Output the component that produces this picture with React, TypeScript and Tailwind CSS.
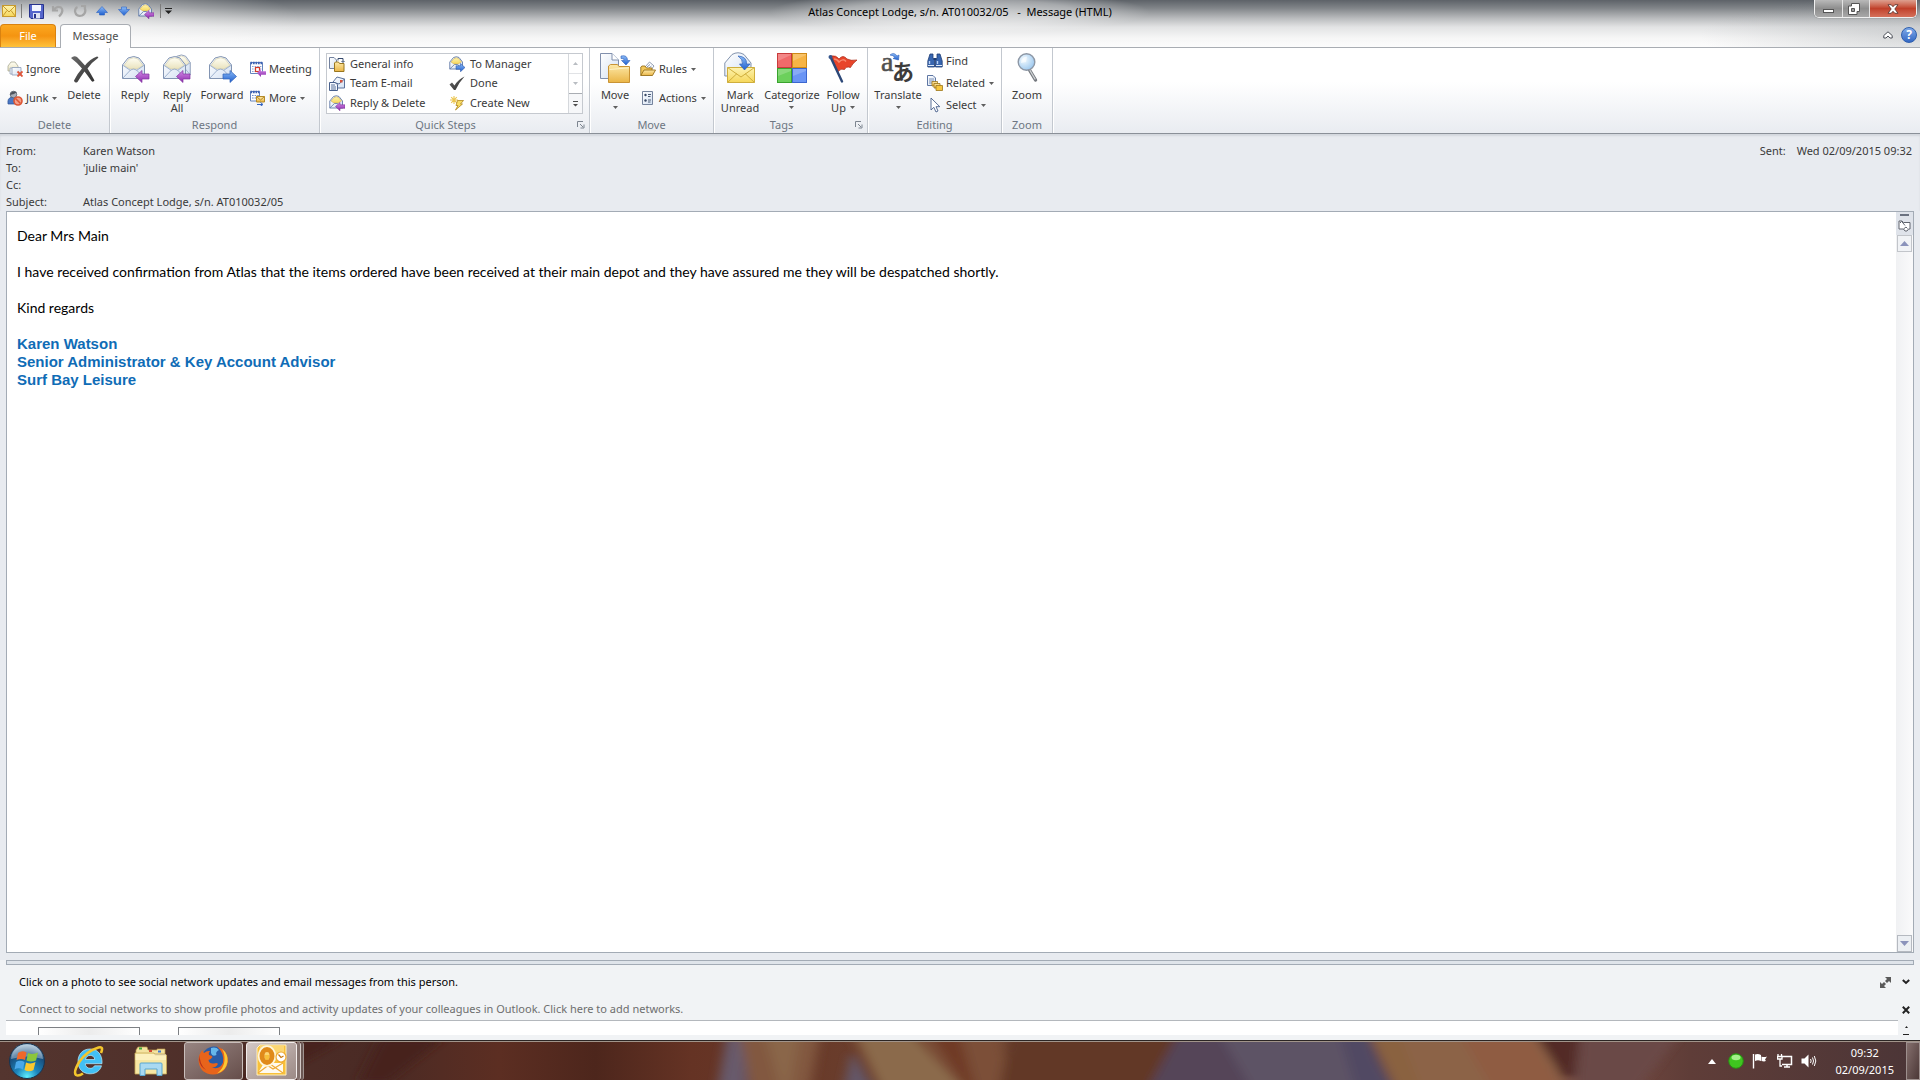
import type { ReactNode } from 'react';
import clsx from 'clsx';

/* ---------- shared icon pieces ---------- */

function Defs() {
  return (
    <svg className="absolute h-0 w-0" aria-hidden="true">
      <defs>
        <linearGradient id="paper" x1="0" y1="0" x2="1" y2="1">
          <stop offset="0" stopColor="#ffffff" />
          <stop offset="1" stopColor="#d3e0f2" />
        </linearGradient>
        <linearGradient id="cream" x1="0" y1="0" x2="0" y2="1">
          <stop offset="0" stopColor="#fffef4" />
          <stop offset="1" stopColor="#e9e2bd" />
        </linearGradient>
        <linearGradient id="folder" x1="0" y1="0" x2="0" y2="1">
          <stop offset="0" stopColor="#fde9a8" />
          <stop offset="1" stopColor="#eab546" />
        </linearGradient>
        <linearGradient id="mail" x1="0" y1="0" x2="0" y2="1">
          <stop offset="0" stopColor="#fdf3b0" />
          <stop offset="1" stopColor="#f6d75a" />
        </linearGradient>
        <linearGradient id="purple" x1="0" y1="0" x2="0" y2="1">
          <stop offset="0" stopColor="#d58be8" />
          <stop offset="1" stopColor="#8b2bac" />
        </linearGradient>
        <linearGradient id="blue" x1="0" y1="0" x2="0" y2="1">
          <stop offset="0" stopColor="#8dbcf7" />
          <stop offset="1" stopColor="#1f5fce" />
        </linearGradient>
        <linearGradient id="ink" x1="0" y1="0" x2="1" y2="1">
          <stop offset="0" stopColor="#6b6b6b" />
          <stop offset="1" stopColor="#2b2b2b" />
        </linearGradient>
        <radialGradient id="lens" cx="0.35" cy="0.35" r="0.8">
          <stop offset="0" stopColor="#f4fbff" />
          <stop offset="1" stopColor="#8fc0ec" />
        </radialGradient>
      </defs>
    </svg>
  );
}

function OpenEnvelope() {
  return (
    <g>
      <path d="M1.500 9 L7 2 Q13 -1 18 2 L23.500 9 V22.500 H1.500 Z" fill="url(#paper)" stroke="#8294b2" />
      <path d="M3 9.500 L8 3 Q13 .5 17 3 L22 9.500 L16 13 H9 Z" fill="url(#cream)" stroke="#cdc7a4" strokeWidth=".6" />
      <path d="M1.500 9 L9.500 14.500 M23.500 9 L15.500 14.500 M1.500 22.500 L9.500 14 Q12.500 12 15.500 14 L23.500 22.500" fill="none" stroke="#96abcb" strokeWidth=".9" />
    </g>
  );
}

function LeftArrow() {
  return <path d="M14.500 20.500 L21 14.500 V18 H28 V23 H21 V26.500 Z" fill="url(#purple)" stroke="#8333a0" strokeWidth=".7" />;
}

function BigSvg({ children }: { children: ReactNode }) {
  return (
    <svg width="32" height="32" viewBox="0 0 32 32" aria-hidden="true">
      {children}
    </svg>
  );
}

function SmallSvg({ children }: { children: ReactNode }) {
  return (
    <svg width="16" height="16" viewBox="0 0 16 16" className="shrink-0" aria-hidden="true">
      {children}
    </svg>
  );
}

const DeleteIcon = () => (
  <BigSvg>
    <path
      d="M3 6 Q6 3 9 5 Q13 9 17 13.500 Q22 7 29 4.500 Q31 4.500 30 6 Q24 10 19.500 16.500 Q23 22 26.500 28.500 Q25 30.500 23.500 29 Q20 24 16.500 19.500 Q12.500 25 9.500 30 Q6.500 31.500 6 28.500 Q9 22 14 16.500 Q9 10.500 3 6 Z"
      fill="url(#ink)"
    />
  </BigSvg>
);

const ReplyIcon = () => (
  <BigSvg>
    <g transform="translate(2 4)"><OpenEnvelope /><LeftArrow /></g>
  </BigSvg>
);

const ReplyAllIcon = () => (
  <BigSvg>
    <g transform="translate(10 2.500) scale(.82 .9)"><OpenEnvelope /></g>
    <g transform="translate(1 4)"><OpenEnvelope /><LeftArrow /></g>
  </BigSvg>
);

const ForwardIcon = () => (
  <BigSvg>
    <g transform="translate(2 4)">
      <OpenEnvelope />
      <path d="M28.500 20.500 L22 14.500 V18 H15 V23 H22 V26.500 Z" fill="url(#blue)" stroke="#2b5eb8" strokeWidth=".7" />
    </g>
  </BigSvg>
);

const BlueHook = () => (
  <path d="M22 4 Q28.500 2.500 28.500 8.500 H31 L27 13 L22.500 8.500 H25 Q25.500 6 22 6.500 Z" fill="url(#blue)" stroke="#2b5eb8" strokeWidth=".6" />
);

const MoveIcon = () => (
  <BigSvg>
    <path d="M1.500 1.500 H13 L19.500 8 V26.500 H1.500 Z" fill="url(#paper)" stroke="#8190ad" />
    <path d="M13 1.500 V8 H19.500" fill="#fff" stroke="#8190ad" />
    <BlueHook />
    <path d="M9.500 30.500 V14 L11.500 12.500 H18.500 L20 14.500 H30.500 V30.500 Z" fill="url(#folder)" stroke="#c99334" />
    <path d="M10.500 17.500 L30 15.800" stroke="#fff3c8" />
  </BigSvg>
);

const MarkUnreadIcon = () => (
  <BigSvg>
    <path d="M.8 11 L8 2.500 Q14 -1 20 2.500 L27 11 V24 H.8 Z" fill="url(#paper)" stroke="#8293ad" />
    <path d="M3.500 15.500 H30.500 V30.500 H3.500 Z" fill="url(#mail)" stroke="#cfae3c" />
    <path d="M3.500 30.500 L13 21.500 M30.500 30.500 L21 21.500 M3.500 15.500 L17 25 L30.500 15.500" fill="none" stroke="#cfae3c" />
    <path d="M14 4 Q23 4.500 22.500 12 H26 L20.500 18 L15.500 12 H18.500 Q19 7 14 4 Z" fill="url(#blue)" stroke="#2b5eb8" strokeWidth=".7" />
  </BigSvg>
);

const CategorizeIcon = () => (
  <BigSvg>
    <rect x="1.500" y="1.500" width="14" height="14" fill="#f06a6a" stroke="#c83c3c" />
    <rect x="16.500" y="1.500" width="14" height="14" fill="#f7b445" stroke="#cf8a18" />
    <rect x="1.500" y="16.500" width="14" height="14" fill="#6cd05c" stroke="#39a32e" />
    <rect x="16.500" y="16.500" width="14" height="14" fill="#6a95f5" stroke="#3b66cf" />
    <path d="M2 9 L15 3 V2 H2 Z M17 9 L30 3 V2 H17 Z M2 24 L15 19 V17 H2 Z M17 24 L30 19 V17 H17 Z" fill="#fff" opacity=".2" />
  </BigSvg>
);

const FollowUpIcon = () => (
  <BigSvg>
    <path d="M4 4 Q9 3 12 7 Q16 2 20 7 Q24 9 30 8 Q25 12 23.500 15.500 Q19 14 17.500 17.500 Q14 16 11 19.500 Z" fill="#e8452a" stroke="#a92612" strokeWidth=".7" />
    <path d="M7 7 Q10 7 12 10 Q16 6 19 9.500" fill="none" stroke="#f78a70" strokeWidth="1.500" />
    <path d="M3.500 5 L15 29.500" stroke="#2c4878" strokeWidth="2.400" strokeLinecap="round" />
    <circle cx="3.500" cy="5" r="2" fill="#35558c" />
  </BigSvg>
);

const TranslateIcon = () => (
  <svg width="34" height="46" viewBox="0 -8 34 46" className="-mt-2 -mb-1.5" aria-hidden="true">
    <text x="0" y="19" fontSize="28" fontFamily="Liberation Serif, serif" fill="#505050" stroke="#505050" strokeWidth=".6">a</text>
    <text x="11" y="28" fontSize="22" fontFamily="Noto Sans CJK JP, sans-serif" fontWeight="700" fill="#3c3c3c">あ</text>
    <path d="M9 3 Q13 -.5 16 4 L18 3 L17.500 8 L12 6.500 L14 5.500 Q12 3 9 3 Z" fill="url(#blue)" stroke="#2b5eb8" strokeWidth=".6" />
  </svg>
);

const ZoomIcon = () => (
  <BigSvg>
    <path d="M18.500 18 L24.500 28" stroke="#74787e" strokeWidth="3.400" strokeLinecap="round" />
    <path d="M19 18.500 L24 27" stroke="#cfd2d5" strokeWidth="1.400" strokeLinecap="round" />
    <circle cx="15.500" cy="10" r="8.300" fill="url(#lens)" stroke="#8d97a5" strokeWidth="1.400" />
    <path d="M10 11 Q10 5 16 4.500 L15 10 Z" fill="#fff" opacity=".6" />
  </BigSvg>
);

const IgnoreIcon = () => (
  <SmallSvg>
    <path d="M1 5 L4 1 H8 L11 5 V10 H1 Z" fill="url(#cream)" stroke="#a9a994" strokeWidth=".8" />
    <path d="M3 7 H12 V13 H3 Z" fill="#eef3fb" stroke="#98a6bd" strokeWidth=".8" />
    <path d="M5 6.500 H14 V14 H5 Z" fill="url(#paper)" stroke="#8d9db8" strokeWidth=".8" />
    <path d="M10.500 10.500 L15.500 15.500 M15.500 10.500 L10.500 15.500" stroke="#e0563a" strokeWidth="1.800" />
  </SmallSvg>
);

const JunkIcon = () => (
  <SmallSvg>
    <path d="M1 14 Q0 8 5 7 Q9 7 10 14 Z" fill="#4a78c4" stroke="#2b4f92" strokeWidth=".7" />
    <circle cx="6.500" cy="4.500" r="3.300" fill="#a9afb9" stroke="#4d535d" strokeWidth=".7" />
    <path d="M3 5 Q4 0 10 2 L7 4 Z" fill="#4d535d" />
    <circle cx="11" cy="11" r="4" fill="#f5a08a" stroke="#dc5634" strokeWidth="1.600" />
    <path d="M8.500 8.500 L13.500 13.500" stroke="#dc5634" strokeWidth="1.600" />
  </SmallSvg>
);

const MeetingIcon = () => (
  <SmallSvg>
    <path d="M.5 1.500 H12.500 V12.500 H.5 Z" fill="#fff" stroke="#6483bd" />
    <path d="M.5 2 H12.500" stroke="#3b62b4" strokeWidth="2.400" strokeDasharray="1.700 .8" />
    <path d="M2 5.500 H11.500 M2 8 H11.500 M2 10.500 H8" stroke="#8aa5d6" strokeWidth="1.200" strokeDasharray="1.600 1" />
    <rect x="5.500" y="6.500" width="4" height="4" fill="#fff" stroke="#d33a2a" strokeWidth="1.200" />
    <path d="M7 12 L11 8 V10.300 H16 V13.700 H11 V16 Z" fill="url(#purple)" />
  </SmallSvg>
);

const MoreIcon = () => (
  <SmallSvg>
    <path d="M.5 1.500 H9.500 V11 H.5 Z" fill="#fff" stroke="#6483bd" />
    <path d="M.5 2 H9.500" stroke="#3b62b4" strokeWidth="2.400" strokeDasharray="1.700 .8" />
    <path d="M2 5.500 H9 M2 8 H7" stroke="#6a8cc9" strokeWidth="1.200" strokeDasharray="1.600 1" />
    <path d="M6.500 6.500 H14.500 V12 H6.500 Z" fill="url(#folder)" stroke="#b48a28" />
    <path d="M6.500 6.500 L10.500 10 L14.500 6.500" fill="none" stroke="#b48a28" />
    <path d="M7 14.500 H12 M10.500 12.500 L13 14.500 L10.500 16" fill="none" stroke="#2f62c0" />
  </SmallSvg>
);

const MoveSmallIcon = () => (
  <SmallSvg>
    <path d="M.5 1.500 H5 L7.500 4 V12.500 H.5 Z" fill="url(#paper)" stroke="#72819e" />
    <path d="M9 2.500 H14 V6 M9 2.500 V4.500 M12.500 5 L14 6.500 L15.500 5" fill="none" stroke="#33476b" />
    <path d="M5.500 15.500 V7 L6.500 6 H9.500 L10.500 7.500 H15 V15.500 Z" fill="url(#folder)" stroke="#99761f" />
  </SmallSvg>
);

const TeamIcon = () => (
  <SmallSvg>
    <path d="M4 7 L8 2 L15.500 4 V13 H4 Z" fill="url(#paper)" stroke="#5c739c" />
    <path d="M4 7 L10 9 L15.500 4" fill="none" stroke="#5c739c" />
    <rect x="11" y="5" width="2.500" height="2.500" fill="#d7523b" />
    <path d="M.5 7.500 H6 L8.500 9.500 V15.500 H.5 Z" fill="#f5f9ff" stroke="#48608c" />
    <path d="M2 10 H6 M2 12 H7 M2 14 H7" stroke="#48608c" strokeWidth=".9" />
  </SmallSvg>
);

function SmallEnvelope() {
  return (
    <g>
      <path d="M.8 6 L4.500 1.500 Q7.500 0 10 1.500 L13.500 6 V13 H.8 Z" fill="url(#paper)" stroke="#5d78a6" strokeWidth=".9" />
      <path d="M2 6 L5 2.500 Q7.500 1 9.500 2.500 L12.500 6 L9 8 H5 Z" fill="url(#mail)" stroke="#cfae5a" strokeWidth=".6" />
      <path d="M.8 13 L5.500 8.500 H8.500 L13.500 13" fill="none" stroke="#5d78a6" strokeWidth=".8" />
    </g>
  );
}

const ReplyDeleteIcon = () => (
  <SmallSvg>
    <SmallEnvelope />
    <path d="M6.500 11.500 L11 7.500 V9.800 H16 V13.300 H11 V15.800 Z" fill="url(#purple)" stroke="#74238f" strokeWidth=".5" />
  </SmallSvg>
);

const ToManagerIcon = () => (
  <SmallSvg>
    <SmallEnvelope />
    <path d="M16 11.500 L11.500 7.500 V9.800 H7 V13.300 H11.500 V15.800 Z" fill="url(#blue)" stroke="#1e4da3" strokeWidth=".5" />
  </SmallSvg>
);

const DoneIcon = () => (
  <SmallSvg>
    <path d="M.5 9.500 L3 7.500 L5.500 10.500 Q9 4.500 15.500 1.500 Q10 7.500 6.500 15 H5 Z" fill="url(#ink)" />
  </SmallSvg>
);

const CreateNewIcon = () => (
  <SmallSvg>
    <path d="M5 1 V9 M1 5 H9 M2.200 2.200 L7.800 7.800 M7.800 2.200 L2.200 7.800" stroke="#ecc650" strokeWidth="1.100" />
    <path d="M8.500 5.500 H14.500 L11.500 9 H13.500 L6.500 15 L9 10.500 H7 Z" fill="#f9dd63" stroke="#b08620" strokeWidth=".8" />
  </SmallSvg>
);

const RulesIcon = () => (
  <SmallSvg>
    <path d="M5 6 L9.500 1 L14 5 L10 10 Z" fill="#fff" stroke="#72819e" strokeWidth=".8" />
    <path d="M7 6 L10 3.500 M8.500 7.500 L11.500 5" stroke="#6f86ad" strokeWidth=".9" />
    <path d="M.8 14.500 V6 L2 5 H5 L6.500 7 H12 V9" fill="#f2c75a" stroke="#99701a" strokeWidth=".9" />
    <path d="M.8 14.500 L4 9 H15.500 L12.500 14.500 Z" fill="url(#folder)" stroke="#99701a" strokeWidth=".9" />
  </SmallSvg>
);

const ActionsIcon = () => (
  <SmallSvg>
    <path d="M2.500 1.500 H12.500 V14.500 H2.500 Z" fill="url(#paper)" stroke="#75839c" />
    <circle cx="5.500" cy="5" r="1.200" fill="#394965" />
    <circle cx="5.500" cy="10.500" r="1.200" fill="#394965" />
    <path d="M8 4.500 H11 M8 6.500 H10.500 M8 10 H11 M8 12 H10.500" stroke="#394965" strokeWidth=".9" />
  </SmallSvg>
);

const FindIcon = () => (
  <SmallSvg>
    <path d="M3 1 H6 V5 L7.500 7 V14 H.8 V8 Z M10 1 H13 L15.200 8 V14 H8.500 V7 L10 5 Z" fill="#3765b0" stroke="#1e3c74" strokeWidth=".8" />
    <path d="M6.500 6 H9.500" stroke="#1e3c74" strokeWidth="2" />
    <path d="M2.500 8 V11 M10.500 8 V11" stroke="#b8d0f4" strokeWidth="1.400" />
    <path d="M1 12.500 H7 M9 12.500 H15" stroke="#dfe9f8" />
  </SmallSvg>
);

const RelatedIcon = () => (
  <SmallSvg>
    <path d="M.5 .5 H6 L8.500 3 V10.500 H.5 Z" fill="url(#paper)" stroke="#5e76a3" />
    <path d="M2 4 H7 M2 6 H7 M2 8 H7" stroke="#5e76a3" strokeWidth=".8" />
    <path d="M5 6.500 H10.500 V11 H5 Z" fill="url(#folder)" stroke="#9c761b" strokeWidth=".8" />
    <path d="M7 8.500 H13 V13 H7 Z" fill="url(#folder)" stroke="#9c761b" strokeWidth=".8" />
    <path d="M9 10.500 H15.500 V15.500 H9 Z" fill="#f6c63f" stroke="#9c761b" strokeWidth=".8" />
  </SmallSvg>
);

const SelectIcon = () => (
  <SmallSvg>
    <path d="M4 1 V13 L6.800 10.300 L9 15 L11 14 L9 9.700 H12.800 Z" fill="#fff" stroke="#48608c" strokeWidth=".9" />
  </SmallSvg>
);

function Caret({ className }: { className?: string }) {
  return (
    <svg width="5" height="3" viewBox="0 0 5 3" className={clsx('shrink-0', className)} aria-hidden="true">
      <path d="M0 0 H5 L2.500 3 Z" fill="#5f5f5f" />
    </svg>
  );
}

/* ---------- ribbon ---------- */

type BigButtonProps = { icon: ReactNode; lines: string[]; menu?: boolean; className?: string };

function BigButton({ icon, lines, menu, className }: BigButtonProps) {
  return (
    <button type="button" className={clsx('flex flex-col items-center pt-1', className)}>
      {icon}
      <span className="mt-1 flex flex-col items-center leading-[13px]">
        {lines.map((line, i) => (
          <span key={line} className="flex items-center gap-1 whitespace-nowrap">
            {line}
            {menu && i === 1 && <Caret />}
          </span>
        ))}
        {menu && lines.length === 1 && <Caret className="mt-[5px]" />}
      </span>
    </button>
  );
}

function SmallButton({ icon, label, menu }: { icon: ReactNode; label: string; menu?: boolean }) {
  return (
    <button type="button" className="flex h-[22px] items-center gap-[3px] whitespace-nowrap">
      {icon}
      {label}
      {menu && <Caret className="ml-px" />}
    </button>
  );
}

function Group({ title, launcher, className, children }: { title: string; launcher?: boolean; className: string; children: ReactNode }) {
  return (
    <section aria-label={title} className={clsx('flex shrink-0 flex-col border-r border-[#c3c8cf] shadow-[1px_0_0_#fff]', className)}>
      <div className="flex flex-1 items-start">{children}</div>
      <div className={clsx('relative h-4 text-center leading-[15px] text-[#6d7682]', launcher && 'pr-[18px]')}>
        {title}
        {launcher && (
          <button type="button" aria-label={`${title} options`} className="absolute right-1 top-1">
            <svg width="8" height="8" viewBox="0 0 8 8">
              <path d="M.5 6 V.5 H6 M3 3 L6 6 M7 3.500 V7 H3.500" fill="none" stroke="#7d8590" />
            </svg>
          </button>
        )}
      </div>
    </section>
  );
}

const quickSteps = [
  { label: 'General info', icon: <MoveSmallIcon /> },
  { label: 'To Manager', icon: <ToManagerIcon /> },
  { label: 'Team E-mail', icon: <TeamIcon /> },
  { label: 'Done', icon: <DoneIcon /> },
  { label: 'Reply & Delete', icon: <ReplyDeleteIcon /> },
  { label: 'Create New', icon: <CreateNewIcon /> },
];

function QuickSteps() {
  return (
    <div className="ml-1.5 mt-[5px] flex h-[61px] w-[257px] border border-[#c5c9cf] bg-white">
      <div className="grid flex-1 grid-cols-[120px_1fr] grid-rows-3">
        {quickSteps.map((s) => (
          <button key={s.label} type="button" className="flex items-center gap-[5px] pl-0.5 whitespace-nowrap">
            {s.icon}
            {s.label}
          </button>
        ))}
      </div>
      <div className="grid w-[14px] grid-rows-3 border-l border-[#d5d8dc]">
        <button type="button" aria-label="Previous row" className="flex items-center justify-center border-b border-[#e1e3e6]">
          <svg width="5" height="3"><path d="M0 3 H5 L2.500 0 Z" fill="#b9bdc2" /></svg>
        </button>
        <button type="button" aria-label="Next row" className="flex items-center justify-center">
          <svg width="5" height="3"><path d="M0 0 H5 L2.500 3 Z" fill="#b9bdc2" /></svg>
        </button>
        <button type="button" aria-label="More quick steps" className="flex items-center justify-center border-t border-[#a9adb3] bg-[#f6f7f9]">
          <svg width="7" height="6"><path d="M1 0 H6 V1 H1 Z M1 3 H6 L3.500 5.500 Z" fill="#4d4d4d" /></svg>
        </button>
      </div>
    </div>
  );
}

function Ribbon() {
  return (
    <div className="flex h-[86px] border-b border-[#8a9098] bg-linear-to-b from-white from-40% to-[#e9ecf1] text-[11px] text-[#3a3a3a]">
      <Group title="Delete" className="w-[110px]">
        <div className="flex w-[61px] flex-col gap-[7px] pl-[7px] pt-[10px]">
          <SmallButton icon={<IgnoreIcon />} label="Ignore" />
          <SmallButton icon={<JunkIcon />} label="Junk" menu />
        </div>
        <BigButton icon={<DeleteIcon />} lines={['Delete']} className="w-[46px]" />
      </Group>
      <Group title="Respond" className="w-[210px]">
        <BigButton icon={<ReplyIcon />} lines={['Reply']} className="ml-[3px] w-11" />
        <BigButton icon={<ReplyAllIcon />} lines={['Reply', 'All']} className="w-10" />
        <BigButton icon={<ForwardIcon />} lines={['Forward']} className="w-[50px]" />
        <div className="flex flex-col gap-[7px] pl-[3px] pt-[10px]">
          <SmallButton icon={<MeetingIcon />} label="Meeting" />
          <SmallButton icon={<MoreIcon />} label="More" menu />
        </div>
      </Group>
      <Group title="Quick Steps" launcher className="w-[270px]">
        <QuickSteps />
      </Group>
      <Group title="Move" className="w-[124px]">
        <BigButton icon={<MoveIcon />} lines={['Move']} menu className="ml-0.5 w-[46px]" />
        <div className="flex flex-col gap-[7px] pl-0.5 pt-[10px]">
          <SmallButton icon={<RulesIcon />} label="Rules" menu />
          <SmallButton icon={<ActionsIcon />} label="Actions" menu />
        </div>
      </Group>
      <Group title="Tags" launcher className="w-[154px]">
        <BigButton icon={<MarkUnreadIcon />} lines={['Mark', 'Unread']} className="ml-0.5 w-12" />
        <BigButton icon={<CategorizeIcon />} lines={['Categorize']} menu className="w-14" />
        <BigButton icon={<FollowUpIcon />} lines={['Follow', 'Up']} menu className="w-[46px]" />
      </Group>
      <Group title="Editing" className="w-[134px]">
        <BigButton icon={<TranslateIcon />} lines={['Translate']} menu className="ml-1 w-[52px]" />
        <div className="flex flex-col pl-[3px] pt-0.5">
          <SmallButton icon={<FindIcon />} label="Find" />
          <SmallButton icon={<RelatedIcon />} label="Related" menu />
          <SmallButton icon={<SelectIcon />} label="Select" menu />
        </div>
      </Group>
      <Group title="Zoom" className="w-[51px]">
        <BigButton icon={<ZoomIcon />} lines={['Zoom']} className="w-full" />
      </Group>
    </div>
  );
}

/* ---------- title bar ---------- */

function QuickAccess() {
  return (
    <div className="flex h-6 items-center pl-0.5 pb-0.5">
      <svg width="14" height="12" viewBox="0 0 14 12">
        <rect x=".5" y=".5" width="13" height="11" fill="url(#mail)" stroke="#c79a2e" />
        <path d="M.5 .5 L7 7 L13.500 .5 M.5 11.500 L5 5.500 M13.500 11.500 L9 5.500" fill="none" stroke="#c79a2e" />
      </svg>
      <span className="ml-[5px] h-[14px] w-px bg-[#7c7c7c]" />
      <button type="button" aria-label="Save" className="ml-[7px]">
        <svg width="15" height="15" viewBox="0 0 15 15">
          <path d="M.5 .5 H14.500 V14.500 H2 L.5 13 Z" fill="#5566cc" stroke="#27338c" />
          <rect x="3" y="1" width="9" height="6" fill="#f3f6ff" />
          <rect x="4" y="9" width="7" height="5.500" fill="#dfe4f4" />
          <rect x="5" y="10" width="2" height="4" fill="#27338c" />
        </svg>
      </button>
      <button type="button" aria-label="Undo" className="ml-[7px]">
        <svg width="14" height="14" viewBox="0 0 14 14">
          <path d="M2 2 V6.500 H7 M2.500 6 Q6 1.500 10 3.500 Q13.500 7 8 12.500" fill="none" stroke="#a5a5a5" strokeWidth="2.200" />
        </svg>
      </button>
      <button type="button" aria-label="Redo" className="ml-2">
        <svg width="14" height="14" viewBox="0 0 14 14">
          <path d="M8 2 H12 V6 M11.500 3 Q14 9 9 11.500 Q3 13 2 7.500 Q2 4 4.500 3" fill="none" stroke="#a5a5a5" strokeWidth="2.200" />
        </svg>
      </button>
      <button type="button" aria-label="Previous item" className="ml-[9px]">
        <svg width="12" height="10" viewBox="0 0 12 10">
          <path d="M6 .5 L11.500 6.500 H8.500 V9 H3.500 V6.500 H.5 Z" fill="url(#blue)" stroke="#2a62c4" strokeWidth=".6" />
        </svg>
      </button>
      <button type="button" aria-label="Next item" className="ml-[10px]">
        <svg width="12" height="10" viewBox="0 0 12 10">
          <path d="M6 9.500 L11.500 3.500 H8.500 V1 H3.500 V3.500 H.5 Z" fill="url(#blue)" stroke="#2a62c4" strokeWidth=".6" />
        </svg>
      </button>
      <button type="button" aria-label="Reply & Delete" className="ml-2">
        <ReplyDeleteIcon />
      </button>
      <span className="ml-1.5 h-[14px] w-px bg-[#7c7c7c]" />
      <button type="button" aria-label="Customize Quick Access Toolbar" className="ml-1">
        <svg width="7" height="6" viewBox="0 0 7 6"><path d="M0 0 H7 V1 H0 Z M0 2.500 H7 L3.500 6 Z" fill="#222" /></svg>
      </button>
    </div>
  );
}

function WindowControls() {
  return (
    <div className="mr-[3px] flex h-[18px] justify-self-end rounded-b-[5px] border border-t-0 border-[#f0f0f0] shadow-[0_0_1px_#444]">
      <button type="button" aria-label="Minimize" className="flex w-7 items-center justify-center rounded-bl border-r border-[#e3e3e3] bg-linear-to-b from-[#b9b9b9] via-[#8e8e8e] to-[#a8a8a8] pt-1">
        <span className="h-1 w-[11px] border border-[#555] bg-white" />
      </button>
      <button type="button" aria-label="Restore" className="flex w-[27px] items-center justify-center border-r border-[#e3e3e3] bg-linear-to-b from-[#b9b9b9] via-[#8e8e8e] to-[#a8a8a8] pr-1">
        <svg width="12" height="12" viewBox="0 0 12 12">
          <path d="M3.500 .5 H11.500 V8.500 H9 V11.500 H.5 V3 H3.500 Z" fill="#fff" stroke="#555" />
          <path d="M3.500 5.500 H6.500 V8.500 H3.500 Z" fill="#9b9b9b" stroke="#555" />
        </svg>
      </button>
      <button type="button" aria-label="Close" className="flex w-[46px] items-center justify-center rounded-br bg-linear-to-b from-[#dda08f] via-[#c0402a] to-[#d5705a]">
        <svg width="12" height="10" viewBox="0 0 13 11">
          <path d="M1 .8 H4.500 L6.500 3 L8.500 .8 H12 L8.500 5.500 L12 10.200 H8.500 L6.500 8 L4.500 10.200 H1 L4.500 5.500 Z" fill="#fff" stroke="#53302b" strokeWidth=".9" />
        </svg>
      </button>
    </div>
  );
}

function TitleArea() {
  return (
    <header className="h-12 bg-[radial-gradient(ellipse_260px_44px_at_40px_20px,#ffffffb0,#ffffff00),radial-gradient(ellipse_190px_22px_at_50%_12px,#ffffff90,#ffffff60_60%,#ffffff00),radial-gradient(ellipse_220px_40px_at_100%_36px,#8f949850,#ffffff00),linear-gradient(to_bottom,#5d6268,#808488_8px,#b8babc_18px,#e2e3e4_27px,#f6f6f6_38px,#fdfdfd)]">
      <div className="grid h-6 grid-cols-[1fr_auto_1fr]">
        <QuickAccess />
        <h1 className="text-[11px] leading-6 whitespace-pre text-black">Atlas Concept Lodge, s/n. AT010032/05   -  Message (HTML)</h1>
        <WindowControls />
      </div>
      <div className="flex h-6 items-end border-b border-[#a9adb3] text-[11px]">
        <button type="button" className="h-[23px] w-14 rounded-t border border-b-0 border-[#d98210] bg-linear-to-b from-[#fba81f] via-[#f59410] to-[#fec23a] text-white">
          File
        </button>
        <button type="button" className="-mb-px ml-1 h-6 w-[71px] rounded-t border border-b-0 border-[#a9adb3] bg-white text-[#4d4d4d]">
          Message
        </button>
        <button type="button" aria-label="Minimize the Ribbon" className="mb-2 ml-auto">
          <svg width="10" height="8" viewBox="0 0 10 8">
            <path d="M5 .8 L9.200 4.500 V7 H7 L5 5 L3 7 H.8 V4.500 Z" fill="#fff" stroke="#4a4f57" />
          </svg>
        </button>
        <button type="button" aria-label="Help" className="mb-1 ml-2 mr-[3px] size-4 rounded-full border border-[#2f5fae] bg-linear-to-b from-[#7fa9e8] to-[#3468c4] text-xs font-bold leading-[14px] text-white">
          ?
        </button>
      </div>
    </header>
  );
}

/* ---------- message ---------- */

const headerRows = [
  ['From:', 'Karen Watson'],
  ['To:', "'julie main'"],
  ['Cc:', ''],
  ['Subject:', 'Atlas Concept Lodge, s/n. AT010032/05'],
];

function MessageHeader() {
  return (
    <div className="flex h-[77px] justify-between pl-1.5 pr-2 pt-2 text-[11px] leading-[17px] text-[#3a3a3a] shadow-[inset_0_2px_2px_#d3d7dd]">
      <dl className="grid grid-cols-[77px_auto] content-start">
        {headerRows.map(([name, value]) => (
          <div key={name} className="contents">
            <dt>{name}</dt>
            <dd>{value}</dd>
          </div>
        ))}
      </dl>
      <dl className="flex gap-[11px]">
        <dt>Sent:</dt>
        <dd>Wed 02/09/2015 09:32</dd>
      </dl>
    </div>
  );
}

function MessageBody() {
  return (
    <div className="mx-1.5 flex min-h-0 flex-1 border border-[#a3abb5] bg-white">
      <article className="flex-1 px-[10px] pt-[15px] font-[Lato,'Noto_Sans',sans-serif] text-[14px] leading-[18px] text-black">
        <p>Dear Mrs Main</p>
        <p className="mt-[18px]">
          I have received confirmation from Atlas that the items ordered have been received at their main depot and they have assured me they will be despatched shortly.
        </p>
        <p className="mt-[18px]">Kind regards</p>
        <p className="mt-[18px] font-['Liberation_Sans',Arial,sans-serif] text-[15px] font-bold text-[#0f6cb6]">
          Karen Watson
          <br />
          Senior Administrator &amp; Key Account Advisor
          <br />
          Surf Bay Leisure
        </p>
      </article>
      <div className="flex w-[17px] flex-col items-start bg-linear-to-r from-[#f0f1f3] to-[#fafafb]">
        <div className="flex h-[23px] w-full flex-col items-center gap-1 bg-[#dfe3ea] pt-0.5">
          <span className="h-0.5 w-[9px] bg-[#6b7280]" />
          <svg width="13" height="12" viewBox="0 0 13 12">
            <path d="M1 1 H4 L5.500 2.500 H12 V9 H10.500 L9 11 H7 L5.500 9 H1 Z" fill="#fff" stroke="#60656e" />
            <path d="M2 3 L3.500 1.500 L5 3 L7 5.500 M5.500 9 L8 7 L9.500 8.500" fill="none" stroke="#60656e" />
          </svg>
        </div>
        <button type="button" aria-label="Scroll up" className="ml-px flex h-[17px] w-[15px] items-center justify-center border border-[#c2c5ca] bg-[#f1f3f6]">
          <svg width="9" height="5"><path d="M0 5 H9 L4.500 0 Z" fill="#8b93bb" /></svg>
        </button>
        <button type="button" aria-label="Scroll down" className="ml-px mt-auto flex h-[17px] w-[15px] items-center justify-center border border-[#b5b9c0] bg-[#eceff3]">
          <svg width="9" height="5"><path d="M0 0 H9 L4.500 5 Z" fill="#8b93bb" /></svg>
        </button>
      </div>
    </div>
  );
}

function PeoplePane() {
  return (
    <section aria-label="People" className="bg-[#f1f3f5] text-[11px]">
      <div className="mx-1.5 h-[5px] border border-[#a3abb5] bg-[#dfe4ea]" />
      <div className="flex h-[34px] items-center pl-[19px] pr-[10px] text-black">
        <p>Click on a photo to see social network updates and email messages from this person.</p>
        <button type="button" aria-label="Expand" className="ml-auto">
          <svg width="11" height="11" viewBox="0 0 11 11">
            <path d="M5 0 H11 V6 L9 4 L7 6 L5 4 L7 2 Z M6 11 H0 V5 L2 7 L4 5 L6 7 L4 9 Z" fill="#5a5a5a" />
          </svg>
        </button>
        <button type="button" aria-label="Collapse pane" className="ml-[11px]">
          <svg width="8" height="6" viewBox="0 0 8 6"><path d="M.8 1 L4 4 L7.200 1" fill="none" stroke="#222" strokeWidth="2" /></svg>
        </button>
      </div>
      <div className="mx-1.5 flex h-[21px] items-center pl-[13px] text-[#6e6e6e]">
        <p>
          Connect to social networks to show profile photos and activity updates of your colleagues in Outlook. <a href="#networks">Click here to add networks.</a>
        </p>
        <button type="button" aria-label="Close" className="ml-auto mr-1">
          <svg width="8" height="8" viewBox="0 0 8 8"><path d="M.8 .8 L7.200 7.200 M7.200 .8 L.8 7.200" stroke="#222" strokeWidth="2" /></svg>
        </button>
      </div>
      <div className="mx-1.5 flex h-[15px]">
        <div className="flex flex-1 gap-[38px] border-t border-[#b4b8bd] bg-white pl-8 pt-1.5">
          <div className="w-[102px] border border-b-0 border-[#7d8084] bg-linear-to-r from-white via-[#ececec] to-white" />
          <div className="w-[102px] border border-b-0 border-[#7d8084] bg-linear-to-r from-white via-[#ececec] to-white" />
        </div>
        <div className="flex w-4 flex-col items-center gap-1.5 pt-1.5">
          <svg width="3" height="2"><path d="M0 2 H3 L1.500 0 Z" fill="#222" /></svg>
          <span className="h-px w-1.5 bg-[#222]" />
        </div>
      </div>
      <div className="h-[5px]" />
    </section>
  );
}

/* ---------- taskbar ---------- */

function Wallpaper() {
  return (
    <svg className="absolute inset-0 h-full w-full" viewBox="0 0 1920 38" preserveAspectRatio="none" aria-hidden="true">
      <defs>
        <filter id="soft" x="-5%" y="-20%" width="110%" height="140%"><feGaussianBlur stdDeviation="6 2" /></filter>
        <linearGradient id="wall">
          <stop offset="0" stopColor="#54352f" />
          <stop offset=".2" stopColor="#4a2a24" />
          <stop offset=".26" stopColor="#5c2e22" />
          <stop offset=".31" stopColor="#4d261c" />
          <stop offset=".36" stopColor="#653324" />
          <stop offset=".5" stopColor="#6d4431" />
          <stop offset=".84" stopColor="#72483f" />
          <stop offset=".88" stopColor="#5f3d38" />
          <stop offset="1" stopColor="#4b3537" />
        </linearGradient>
      </defs>
      <rect width="1920" height="38" fill="url(#wall)" />
      <g filter="url(#soft)">
        <path d="M380 0 H440 L390 38 H360 Z M300 0 H340 L270 38 H230 Z" fill="#46241f" />
        <path d="M727 -6 H742 L748 44 H718 Z" fill="#675a6c" />
        <path d="M740 -6 H820 L810 44 H750 Z" fill="#82593f" />
        <path d="M765 -6 H800 L790 44 H780 Z" fill="#8a6648" />
        <path d="M852 10 L872 44 H844 Z" fill="#635668" />
        <path d="M850 -6 H1000 L1010 44 H880 Z" fill="#7b5039" />
        <path d="M858 -6 H910 L960 44 H880 Z" fill="#8b6b4c" />
        <path d="M930 -6 H960 L975 44 H965 Z" fill="#6f3b26" />
        <path d="M1010 -6 H1180 L1160 44 H1000 Z" fill="#623828" />
        <path d="M1178 -6 H1365 L1392 44 H1150 L1162 22 Z" fill="#5d5265" />
        <path d="M1178 -6 H1220 L1250 44 H1150 Z" fill="#544558" />
        <path d="M1340 -6 H1368 L1390 44 H1355 Z" fill="#514a64" />
        <path d="M1370 -6 H1540 L1565 44 H1395 Z" fill="#8c6447" />
        <path d="M1370 -6 H1400 L1420 44 H1395 Z" fill="#8a623f" />
        <path d="M1460 -6 H1530 L1560 44 H1490 Z" fill="#8f5b43" />
        <path d="M1535 -6 H1580 L1575 34 H1562 Z" fill="#532b26" />
        <path d="M1580 -6 H1680 L1640 44 H1575 Z" fill="#6a4846" />
      </g>
    </svg>
  );
}

function StartOrb() {
  return (
    <svg width="38" height="38" viewBox="0 0 38 38" aria-hidden="true">
      <defs>
        <radialGradient id="orb" cx=".5" cy=".95" r=".9">
          <stop offset="0" stopColor="#5ff0ff" />
          <stop offset=".35" stopColor="#1d86bd" />
          <stop offset=".75" stopColor="#184d7c" />
          <stop offset="1" stopColor="#8fb2cc" />
        </radialGradient>
      </defs>
      <circle cx="19" cy="19" r="17.500" fill="url(#orb)" stroke="#183450" />
      <path d="M3 17 Q5 3 19 2.500 Q33 3 35 17 Q19 12 3 17 Z" fill="#fff" opacity=".35" />
      <path d="M10 11 Q14 8 18.500 10.500 L17 18 Q13 16 8.500 18 Z" fill="#f0682a" />
      <path d="M20 11 Q25 13 30 10.500 L28 18.500 Q23 20.500 18.500 18.500 Z" fill="#8cc63c" />
      <path d="M8 20 Q12 17.500 16.500 20 L15 27.500 Q10.500 25 6.500 27.500 Z" fill="#4aa8ea" />
      <path d="M18 20.500 Q23 22.500 27.500 20 L25.500 28 Q21 30.500 16.500 28 Z" fill="#fcc82e" />
    </svg>
  );
}

function InternetExplorerIcon() {
  return (
    <svg width="32" height="32" viewBox="0 0 32 32" aria-hidden="true">
      <path
        d="M17 4 C9.500 4 5 9.500 5 16.500 C5 24 10 28.800 17 28.800 C23 28.800 27 25.800 28.500 20.800 H21.500 C20.500 22.600 19 23.300 17.200 23.300 C14.300 23.300 12.500 21.500 12.300 18.700 H29 C29.500 10 25 4 17 4 Z M12.500 14.500 C12.900 12 14.700 10.400 17.200 10.400 C19.700 10.400 21.500 12 21.800 14.500 Z"
        fill="#42c0f5"
        stroke="#bdeeff"
        strokeWidth=".7"
      />
      <path d="M28 8 Q31 1 25.500 2.500 Q14 6 6.500 16.500 Q0 27 3 30 Q5.500 31.500 10 28.500" fill="none" stroke="#f3c52c" strokeWidth="2.600" />
    </svg>
  );
}

function ExplorerIcon() {
  return (
    <svg width="34" height="32" viewBox="0 0 34 32" aria-hidden="true">
      <path d="M2 5 L4 2 H13 L14 5 H23 V4 H31 V9 H2 Z" fill="#f4e3a0" stroke="#b99a4a" strokeWidth=".7" />
      <path d="M5 3.500 H8" stroke="#3faa3c" strokeWidth="2" />
      <path d="M15 6 H18" stroke="#d34a33" strokeWidth="2" />
      <path d="M24 6.500 H27" stroke="#3f79d0" strokeWidth="2" />
      <path d="M1 8 H20 L21 10 H32.500 V29 H1 Z" fill="#f7e7a4" stroke="#c6a956" strokeWidth=".8" />
      <path d="M1.500 9 H32 V15 H1.500 Z" fill="#fff6cf" opacity=".6" />
      <path d="M6 30.500 V19 Q6 18 7 18 H27 Q28 18 28 19 V30.500 H23 V24 H11 V30.500 Z" fill="#a9d9f2" stroke="#5aa6cf" />
    </svg>
  );
}

function FirefoxIcon() {
  return (
    <svg width="32" height="32" viewBox="0 0 32 32" aria-hidden="true">
      <circle cx="17" cy="14.500" r="12" fill="#2a5ba6" />
      <path d="M14 4 Q19 2.500 22 6 Q18 8 19.500 11 Q15 13 14 9 Z" fill="#67b7ea" />
      <path d="M20 2.500 Q31 6 31 17 Q29 30 16 30.500 Q3 30 1.500 17 Q1.500 10 5.500 6 Q5.500 8 7 9 Q9.500 6.500 13 7 Q11 9 12 11 Q15 11.500 15.500 13 Q14 15.500 11.500 16 Q12 20 17 19.500 Q20 18.500 21 20 Q19 23.500 15 23.500 Q23 26 26 18.500 Q27.500 9 20 2.500 Z" fill="#e8641b" />
      <path d="M25 5 Q31.500 10 30.500 18 Q29 27 20 29.500 Q27 24 27.500 16.500 Q28 10 25 5 Z" fill="#fbc833" />
      <path d="M3 11 Q2 20 9 26 Q3 23 2 16 Z" fill="#b9331a" />
    </svg>
  );
}

function OutlookIcon() {
  return (
    <svg width="32" height="32" viewBox="0 0 32 32" aria-hidden="true">
      <path d="M5 1 H31 V31 H2 V4 Z" fill="#f8c03a" stroke="#fff0c0" />
      <path d="M5 2 H29 V11 H4 Z" fill="#fde08a" opacity=".7" />
      <path d="M9 19 H28 V29 H3 Z" fill="#fffaf0" />
      <path d="M3 29 L15 20 L28 29 M9 19 L18 25 L28 19" fill="none" stroke="#efab35" strokeWidth="1.200" />
      <ellipse cx="12" cy="12" rx="6" ry="7.500" fill="none" stroke="#fff6da" strokeWidth="6.500" />
      <ellipse cx="12" cy="12" rx="5" ry="6.500" fill="none" stroke="#e08a1a" strokeWidth="5" />
      <circle cx="26" cy="13" r="5" fill="#fff" stroke="#efab35" strokeWidth="1.200" />
      <path d="M23.500 10.500 L26 13.500 L28.500 12" fill="none" stroke="#c9760c" strokeWidth="1.200" />
    </svg>
  );
}

function Taskbar() {
  return (
    <footer className="relative h-10 shrink-0 overflow-hidden border-t border-[#2c2624] bg-[#4f342f] text-white">
      <Wallpaper />
      <div className="relative flex h-full items-center border-t border-[#a1948a] pl-2">
        <button type="button" aria-label="Start"><StartOrb /></button>
        <button type="button" aria-label="Internet Explorer" className="ml-[27px]"><InternetExplorerIcon /></button>
        <button type="button" aria-label="Windows Explorer" className="ml-[29px]"><ExplorerIcon /></button>
        <button type="button" aria-label="Firefox" className="ml-4 flex h-full w-[59px] items-center justify-center rounded-[3px] border border-[#c9bebb] bg-linear-to-br from-[#a99a98cc] to-[#6d5754cc] pr-0.5 pb-0.5">
          <FirefoxIcon />
        </button>
        <button type="button" aria-label="Outlook" className="ml-[3px] flex h-full w-[51px] items-center justify-center rounded-[3px] border border-[#f2eceb] bg-linear-to-br from-[#ebe4e2d9] to-[#aa9b97d9] pr-0.5 pb-0.5">
          <OutlookIcon />
        </button>
        <span className="h-full w-1 rounded-r-[3px] border-r border-[#d4cac7] bg-[#82706c]" />
        <span className="h-full w-[3px] rounded-r-[3px] border-r border-[#a09490] bg-[#6b5854]" />

        <div className="ml-auto flex h-full items-center">
          <button type="button" aria-label="Show hidden icons">
            <svg width="8" height="5"><path d="M0 5 H8 L4 0 Z" fill="#fff" /></svg>
          </button>
          <svg width="16" height="16" viewBox="0 0 16 16" className="ml-3">
            <circle cx="8" cy="8" r="7.300" fill="#3fc51f" stroke="#2a8d16" />
            <ellipse cx="8" cy="4.500" rx="4.500" ry="2.700" fill="#a4f08a" />
          </svg>
          <svg width="16" height="16" viewBox="0 0 16 16" className="ml-2">
            <path d="M1.500 1 V15.500" stroke="#fff" strokeWidth="1.400" />
            <path d="M3 1.500 Q6 .5 9 2 V8 Q6 6.500 3 8 Z M9.500 3.500 Q12 4.500 15 3.500 L13 6.500 Q15 8 12 8.500 L9.500 8 Z" fill="#fff" />
          </svg>
          <svg width="16" height="16" viewBox="0 0 16 16" className="ml-[9px]">
            <path d="M5 3.500 H14.500 V11.500 H5 M7 14 H13 M10 11.500 V14" fill="none" stroke="#fff" strokeWidth="1.500" />
            <path d="M1 1 V3 M4.500 1 V3 M.5 3.500 H5 V6 H.5 Z M3 6 V13 H5" fill="none" stroke="#fff" strokeWidth="1.300" />
          </svg>
          <svg width="16" height="16" viewBox="0 0 16 16" className="ml-2">
            <path d="M.5 5.500 H3.500 L7.500 1.500 V14.500 L3.500 10.500 H.5 Z" fill="#fff" />
            <path d="M9.500 6 Q10.800 8 9.500 10 M11.500 4.500 Q13.500 8 11.500 11.500 M13.300 3 Q16.300 8 13.300 13" fill="none" stroke="#fff" />
          </svg>
          <div className="ml-[18px] text-center text-[11px] leading-[17px]">
            <p>09:32</p>
            <p>02/09/2015</p>
          </div>
          <button type="button" aria-label="Show desktop" className="ml-3 h-full w-[14px] border border-[#9d8f8d] bg-linear-to-br from-[#85706e] to-[#4c3837]" />
        </div>
      </div>
    </footer>
  );
}

export default function App() {
  return (
    <div className="flex h-screen flex-col overflow-hidden bg-[#e8ebf0] font-['Noto_Sans','Open_Sans',sans-serif]">
      <Defs />
      <TitleArea />
      <Ribbon />
      <MessageHeader />
      <MessageBody />
      <div className="h-[7px] shrink-0" />
      <PeoplePane />
      <Taskbar />
    </div>
  );
}
